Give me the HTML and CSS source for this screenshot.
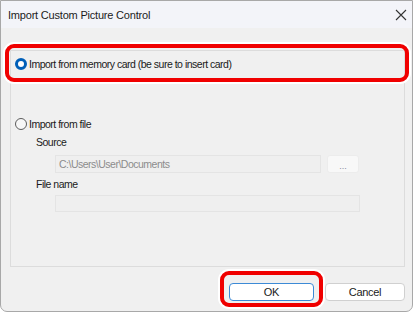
FILE: index.html
```html
<!DOCTYPE html>
<html lang="en">
<head>
  <meta charset="UTF-8">
  <title>Import Custom Picture Control</title>
  <link rel="stylesheet" href="styles.css">
</head>
<body>
  <div class="window">
    <div class="titlebar">
      <span class="title">Import Custom Picture Control</span>
      <svg class="close" width="12" height="12" viewBox="0 0 12 12">
        <path d="M1 1 L11 11 M11 1 L1 11" stroke="#333" stroke-width="1.1" fill="none"/>
      </svg>
    </div>

    <div class="content">
      <div class="legend">-</div>
      <div class="group">
        <label class="radio-row">
          <span class="radio checked"></span>
          <span>Import from memory card (be sure to insert card)</span>
        </label>

        <label class="radio-row second">
          <span class="radio"></span>
          <span>Import from file</span>
        </label>

        <div class="field-label">Source</div>
        <div class="field-row">
          <div class="input source">C:\Users\User\Documents</div>
          <div class="browse">...</div>
        </div>

        <div class="field-label">File name</div>
        <div class="field-row">
          <div class="input filename"></div>
        </div>
      </div>

      <div class="footer">
        <button class="btn ok">OK</button>
        <button class="btn">Cancel</button>
      </div>
    </div>

    <!-- highlight marks drawn over the dialog -->
    <div class="mark mark-card"></div>
    <div class="mark mark-ok"></div>
  </div>
</body>
</html>
```

FILE: styles.css
```css
body {
  margin: 0;
  background: #ffffff;
  font-family: "Liberation Sans", Arial, sans-serif;
  font-size: 10.5px;
  letter-spacing: -0.5px;
  color: #1a1a1a;
}
.window {
  position: relative;
  width: 411px;
  height: 310px;
  border: 1px solid #a8a8a8;
  border-radius: 0 0 7px 7px;
  background: #f0f0f0;
  overflow: hidden;
}
.titlebar {
  display: flex;
  align-items: center;
  justify-content: space-between;
  height: 27px;
  padding: 0 5px 0 7px;
  background: #f3f4f9;
}
.title {
  font-size: 11px;
  color: #1b1b1b;
  letter-spacing: -0.2px;
}
.content {
  padding: 0 7px 0 9px;
}
.legend {
  height: 22px;
  padding-left: 9px;
  line-height: 28px;
  font-size: 10px;
  color: #333;
}
.group {
  height: 210px;
  border: 1px solid #dcdcdc;
  padding: 5px 0 0 4px;
}
.radio-row {
  display: flex;
  align-items: center;
  gap: 2px;
  height: 16px;
}
.radio-row.second {
  margin-top: 44px;
}
.radio {
  width: 10px;
  height: 10px;
  border: 1px solid #5c5c5c;
  border-radius: 50%;
  background: #f7f7f7;
}
.radio.checked {
  width: 6px;
  height: 6px;
  border: 3px solid #005fb8;
  background: #ffffff;
}
.field-label {
  margin: 3px 0 0 21px;
  height: 14px;
  line-height: 14px;
}
.field-row {
  display: flex;
  align-items: center;
  gap: 6px;
  margin: 6px 0 0 40px;
}
.input {
  height: 16px;
  border: 1px solid #e4e4e4;
  background: #efefef;
  color: #8c8c8c;
  line-height: 16px;
  padding-left: 3px;
}
.source {
  width: 261px;
}
.filename {
  width: 300px;
  height: 15px;
}
.browse {
  width: 30px;
  height: 16px;
  border: 1px solid #ececec;
  border-radius: 3px;
  background: #f8f8f8;
  color: #8a8aa0;
  font-size: 9px;
  letter-spacing: 0;
  text-align: center;
  line-height: 20px;
}
.field-row + .field-label {
  margin-top: 4px;
}
.field-row + .field-label + .field-row {
  margin-top: 4px;
}
.footer {
  display: flex;
  justify-content: flex-end;
  gap: 11px;
  padding-top: 16px;
}
.btn {
  width: 80px;
  height: 18px;
  border: 1px solid #d0d0d0;
  border-radius: 4px;
  background: #ffffff;
  font-family: "Liberation Sans", Arial, sans-serif;
  font-size: 11px;
  color: #1a1a1a;
  padding: 0;
  letter-spacing: -0.3px;
}
.btn.ok {
  width: 85px;
  border-color: #3c8ad6;
}
.mark {
  position: absolute;
  border: 4px solid #f00000;
  border-radius: 9px;
  box-shadow: 0 0 0 2px #ffffff;
}
.mark-card {
  left: 4px;
  top: 43px;
  width: 396px;
  height: 30px;
}
.mark-ok {
  left: 219px;
  top: 270px;
  width: 95px;
  height: 28px;
}
```
